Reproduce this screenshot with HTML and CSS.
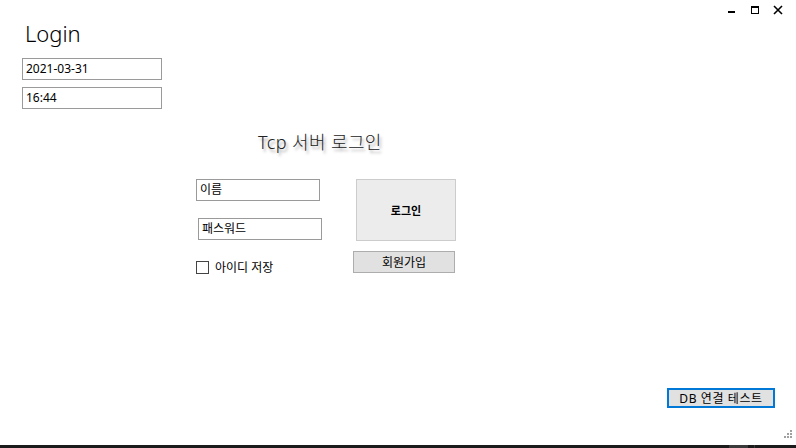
FILE: index.html
```html
<!DOCTYPE html>
<html lang="ko">
<head>
<meta charset="utf-8">
<title>Login</title>
<link rel="stylesheet" href="styles.css">
</head>
<body>
<div class="window">
  <div class="titlebar">
    <span class="ctl ctl-min"><svg width="10" height="10" viewBox="0 0 10 10"><rect x="1" y="6" width="7" height="2" fill="#000"/></svg></span>
    <span class="ctl ctl-max"><svg width="10" height="10" viewBox="0 0 10 10"><rect x="1.5" y="1.5" width="7" height="7" fill="none" stroke="#000" stroke-width="1"/><rect x="1" y="1" width="8" height="2" fill="#000"/></svg></span>
    <span class="ctl ctl-close"><svg width="10" height="10" viewBox="0 0 10 10"><path d="M1 1 L9 9 M9 1 L1 9" stroke="#000" stroke-width="1.6"/></svg></span>
  </div>
  <h1 class="title">Login</h1>
  <div class="field field-date">2021-03-31</div>
  <div class="field field-time">16:44</div>

  <div class="heading">Tcp 서버 로그인</div>

  <div class="panel">
    <div class="left">
      <div class="field field-name">이름</div>
      <div class="field field-pass">패스워드</div>
      <label class="check"><span class="box"></span><span class="check-text">아이디 저장</span></label>
    </div>
    <div class="right">
      <div class="btn btn-login">로그인</div>
      <div class="btn btn-join">회원가입</div>
    </div>
  </div>

  <div class="spacer"></div>
  <div class="footer">
    <div class="btn btn-db">DB 연결 테스트</div>
  </div>
  <div class="grip">
    <i class="d d1"></i><i class="d d2"></i><i class="d d3"></i><i class="d d4"></i><i class="d d5"></i><i class="d d6"></i>
  </div>
  <div class="taskbar"><span class="tb-seg"></span><span class="tb-sep"></span></div>
</div>
</body>
</html>
```
FILE: styles.css
```css
* { box-sizing: border-box; }
html, body { margin: 0; padding: 0; background: #fff; }
body {
  font-family: "Noto Sans", "Noto Sans CJK KR", sans-serif;
  font-size: 12px;
  color: #000;
}
.window {
  position: relative;
  width: 796px;
  height: 448px;
  overflow: hidden;
  display: flex;
  flex-direction: column;
}
.titlebar {
  height: 18px;
  display: flex;
  justify-content: flex-end;
  align-items: flex-start;
  padding: 5px 13px 0 0;
  gap: 13px;
}
.ctl { display: block; width: 10px; height: 10px; }
.ctl svg { display: block; }
.title {
  margin: 0 0 0 25px;
  height: 40px;
  font-weight: 300;
  font-size: 22px;
  line-height: 30px;
  color: #000;
  font-family: "Noto Sans", sans-serif;
}
.field {
  border: 1px solid #9a9a9a;
  height: 22px;
  padding: 0 3px;
  line-height: 20px;
  font-size: 12px;
  background: #fff;
  white-space: nowrap;
}
.field-date { width: 140px; margin-left: 22px; }
.field-time { width: 140px; margin-left: 22px; margin-top: 7px; }
.heading {
  margin: 20px 0 0 258px;
  font-size: 18px;
  line-height: 26px;
  letter-spacing: 0.4px;
  font-weight: 300;
  color: #222;
  text-shadow: 2px 3px 3px rgba(0,0,0,0.35);
  font-family: "Noto Sans", "Noto Sans CJK KR", sans-serif;
}
.panel {
  display: flex;
  margin: 24px 0 0 196px;
}
.left { width: 157px; display: flex; flex-direction: column; align-items: flex-start; }
.field-name { width: 124px; }
.field-pass { width: 124px; margin: 17px 0 0 2px; }
.check { display: flex; align-items: center; margin-top: 21px; height: 13px; }
.box { width: 13px; height: 13px; border: 1px solid #444; background: #fff; }
.check-text { margin-left: 6px; font-size: 12px; line-height: 13px; color: #000; }
.right { display: flex; flex-direction: column; align-items: flex-start; }
.btn {
  display: flex;
  align-items: center;
  justify-content: center;
  font-size: 12px;
  white-space: nowrap;
}
.btn-login {
  width: 100px;
  height: 62px;
  margin-left: 3px;
  background: #ececec;
  border: 1px solid #cccccc;
  font-size: 11px;
  font-weight: 700;
}
.btn-join {
  width: 102px;
  height: 22px;
  margin-top: 10px;
  background: #e1e1e1;
  border: 1px solid #adadad;
}
.spacer { flex: 1; }
.footer {
  display: flex;
  justify-content: flex-end;
  padding-right: 21px;
  margin-bottom: 37px;
}
.btn-db {
  width: 108px;
  height: 20px;
  background: #e1e1e1;
  border: 2px solid #0078d7;
  letter-spacing: 0.6px;
}
.grip {
  position: absolute;
  right: 3px;
  bottom: 9px;
  width: 9px;
  height: 9px;
}
.d { position: absolute; width: 2px; height: 2px; background: #a0a0a0; }
.d1 { left: 6px; top: 0; }
.d2 { left: 3px; top: 3px; }
.d3 { left: 6px; top: 3px; }
.d4 { left: 0; top: 6px; }
.d5 { left: 3px; top: 6px; }
.d6 { left: 6px; top: 6px; }
.taskbar {
  height: 3px;
  background: #1b1b1b;
  display: flex;
  padding-left: 729px;
}
.tb-seg { width: 19px; height: 3px; background: #3a3a3a; }
.tb-sep { width: 1px; height: 3px; margin-left: 6px; background: #3a3a3a; }
```
